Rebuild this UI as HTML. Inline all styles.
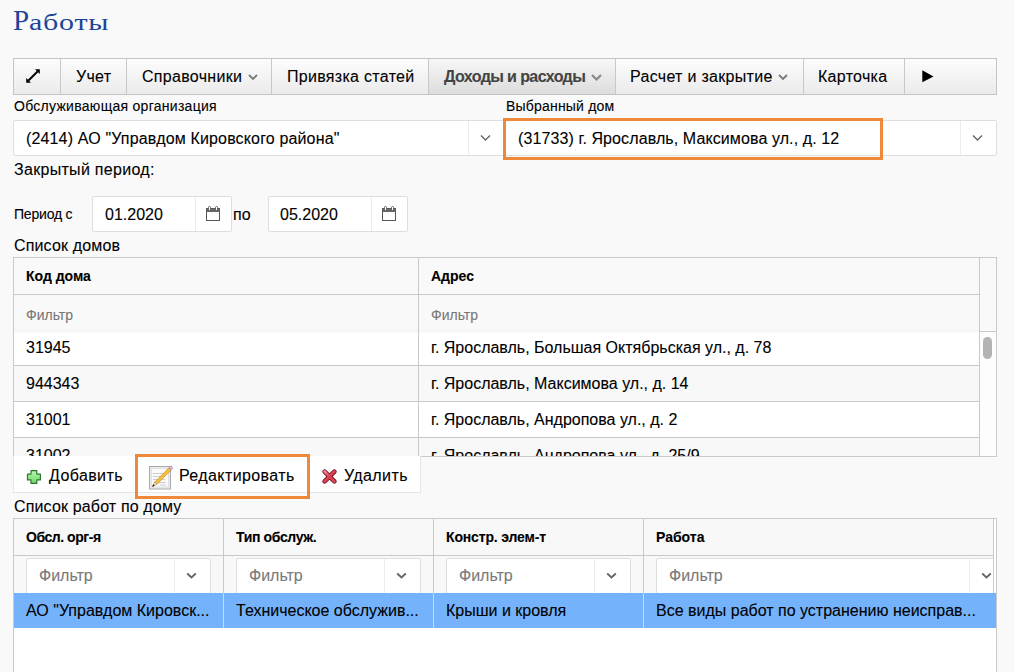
<!DOCTYPE html>
<html><head><meta charset="utf-8">
<style>
*{box-sizing:border-box;margin:0;padding:0}
html,body{width:1014px;height:672px;overflow:hidden;background:#f9f9f9;font-family:"Liberation Sans",sans-serif;color:#000;-webkit-text-stroke:0.1px currentColor}
.a{position:absolute}
.t{position:absolute;white-space:nowrap;line-height:20px;font-size:16px}
#title{position:absolute;left:13px;top:4px;font-family:"Liberation Serif",serif;font-size:29px;line-height:32px;color:#1a4598;white-space:nowrap;-webkit-text-stroke:0}
#tb{position:absolute;left:13px;top:58px;width:984px;height:37px;border:1px solid #c4c4c4;background:linear-gradient(#fcfcfc,#ebebeb)}
.sep{position:absolute;top:0;width:1px;height:35px;background:#c8c8c8}
.chev{position:absolute}
.sel{position:absolute;background:#fff;border:1px solid #dedede;border-radius:2px}
.orange{position:absolute;border:3px solid #ef8838}
.hd{position:absolute;white-space:nowrap;font-weight:bold;font-size:14px;line-height:20px}
.tbt{letter-spacing:0.3px}
.flt{color:#777;font-size:14px}
.hl{position:absolute;height:1px;background:#c9c9c9}
.vl{position:absolute;width:1px;background:#c9c9c9}
</style></head><body>
<div id="title">Р<span style="font-size:24px;letter-spacing:0.6px;display:inline-block;transform:scaleX(1.25);transform-origin:0 0">аботы</span></div>

<div id="tb">
  <div id="active" class="a" style="left:414px;top:0;width:187px;height:35px;background:linear-gradient(#f7f7f7,#dcdcdc)"></div>
  <div class="sep" style="left:46px"></div>
  <div class="sep" style="left:112px"></div>
  <div class="sep" style="left:257px"></div>
  <div class="sep" style="left:414px"></div>
  <div class="sep" style="left:601px"></div>
  <div class="sep" style="left:789px"></div>
  <div class="sep" style="left:890px"></div>
  <svg class="a" style="left:11px;top:9px" width="17" height="17" viewBox="0 0 17 17"><path d="M3.5 12.5 L12.5 3.5" stroke="#000" stroke-width="2"/><path d="M1.2 14.8 L1.2 10 L6 14.8 Z M14.8 1.2 L14.8 6 L10 1.2 Z" fill="#000"/></svg>
  <div class="t tbt" style="left:62px;top:8px">Учет</div>
  <div class="t tbt" style="left:128px;top:8px">Справочники</div>
  <svg class="a" style="left:234px;top:15px" width="10" height="7" viewBox="0 0 10 7"><path d="M1 1 L5 5 L9 1" stroke="#7a7a7a" stroke-width="1.9" fill="none"/></svg>
  <div class="t tbt" style="left:273px;top:8px">Привязка статей</div>
  <div class="t" style="left:430px;top:8px;font-weight:bold;color:#444;font-size:16px;letter-spacing:-0.6px">Доходы и расходы</div>
  <svg class="a" style="left:577px;top:15px" width="11" height="7" viewBox="0 0 11 7"><path d="M1 1 L5.5 5.5 L10 1" stroke="#888" stroke-width="2.2" fill="none"/></svg>
  <div class="t tbt" style="left:616px;top:8px">Расчет и закрытие</div>
  <svg class="a" style="left:764px;top:15px" width="10" height="7" viewBox="0 0 10 7"><path d="M1 1 L5 5 L9 1" stroke="#7a7a7a" stroke-width="1.9" fill="none"/></svg>
  <div class="t tbt" style="left:804px;top:8px">Карточка</div>
  <svg class="a" style="left:908px;top:11px" width="12" height="13" viewBox="0 0 12 13"><path d="M0.3 0.3 L11.5 6.5 L0.3 12.2 Z" fill="#000"/></svg>
</div>

<div class="t" style="left:14px;top:96px;font-size:14px;letter-spacing:0.28px">Обслуживающая организация</div>
<div class="t" style="left:506px;top:96px;font-size:14px;letter-spacing:0.2px">Выбранный дом</div>

<div class="sel" style="left:13px;top:120px;width:492px;height:36px">
  <div class="vl" style="left:454px;top:0;height:34px;background:#ececec"></div>
  <svg class="a" style="left:466px;top:13px" width="12" height="8" viewBox="0 0 12 8"><path d="M1 1.5 L5.5 6 L10 1.5" stroke="#666" stroke-width="1.4" fill="none"/></svg>
  <div class="t" style="left:12px;top:8px;letter-spacing:0.15px">(2414) АО "Управдом Кировского района"</div>
</div>
<div class="sel" style="left:505px;top:120px;width:492px;height:36px">
  <div class="vl" style="left:454px;top:0;height:34px;background:#ececec"></div>
  <svg class="a" style="left:466px;top:13px" width="12" height="8" viewBox="0 0 12 8"><path d="M1 1.5 L5.5 6 L10 1.5" stroke="#666" stroke-width="1.4" fill="none"/></svg>
  <div class="t" style="left:12px;top:8px;letter-spacing:0.1px">(31733) г. Ярославль, Максимова ул., д. 12</div>
</div>
<div class="orange" style="left:503px;top:118px;width:380px;height:42px"></div>

<div class="t" style="left:14px;top:160px;letter-spacing:0.3px">Закрытый период:</div>
<div class="t" style="left:14px;top:204px;font-size:14px;letter-spacing:-0.2px">Период с</div>
<div class="sel" style="left:92px;top:196px;width:140px;height:36px">
  <div class="vl" style="left:102px;top:0;height:34px;background:#ececec"></div>
  <div class="t" style="left:12px;top:8px">01.2020</div>
  <svg class="a" style="left:112px;top:8px" width="16" height="17" viewBox="0 0 16 17"><rect x="1.5" y="3.5" width="13" height="12" fill="#fff" stroke="#555" stroke-width="1"/><rect x="1.5" y="3.5" width="13" height="3.5" fill="#666"/><rect x="3.5" y="1.5" width="2" height="4" rx="1" fill="#fff" stroke="#555" stroke-width="0.9"/><rect x="10.5" y="1.5" width="2" height="4" rx="1" fill="#fff" stroke="#555" stroke-width="0.9"/></svg>
</div>
<div class="t" style="left:233px;top:205px">по</div>
<div class="sel" style="left:268px;top:196px;width:140px;height:36px">
  <div class="vl" style="left:102px;top:0;height:34px;background:#ececec"></div>
  <div class="t" style="left:11px;top:8px">05.2020</div>
  <svg class="a" style="left:112px;top:8px" width="16" height="17" viewBox="0 0 16 17"><rect x="1.5" y="3.5" width="13" height="12" fill="#fff" stroke="#555" stroke-width="1"/><rect x="1.5" y="3.5" width="13" height="3.5" fill="#666"/><rect x="3.5" y="1.5" width="2" height="4" rx="1" fill="#fff" stroke="#555" stroke-width="0.9"/><rect x="10.5" y="1.5" width="2" height="4" rx="1" fill="#fff" stroke="#555" stroke-width="0.9"/></svg>
</div>

<div class="t" style="left:14px;top:236px;letter-spacing:0.15px">Список домов</div>

<!-- table 1 -->
<div class="a" style="left:13px;top:257px;width:984px;height:200px;border:1px solid #c9c9c9;background:#f9f9f9;overflow:hidden">
  <div class="hl" style="left:0;top:36px;width:966px"></div>
  <div class="vl" style="left:404px;top:0;height:200px"></div>
  <div class="vl" style="left:965px;top:0;height:200px"></div>
  <div class="hd" style="left:12px;top:8px">Код дома</div>
  <div class="hd" style="left:417px;top:8px">Адрес</div>
  <div class="t flt" style="left:12px;top:47px">Фильтр</div>
  <div class="t flt" style="left:417px;top:47px">Фильтр</div>
  <div class="a" style="left:0;top:72px;width:965px;height:130px;background:#fff"></div>
  <div class="a" style="left:0;top:72px;width:965px;height:4px;background:linear-gradient(#f3f3f3,#fff)"></div>
  <div class="a" style="left:0;top:108px;width:965px;height:35px;background:#f8f8f8"></div><div class="a" style="left:0;top:180px;width:965px;height:35px;background:#f8f8f8"></div><div class="vl" style="left:404px;top:72px;height:130px"></div>
  <div class="hl" style="left:0;top:107px;width:965px"></div>
  <div class="hl" style="left:0;top:143px;width:965px"></div>
  <div class="hl" style="left:0;top:179px;width:965px"></div>
  <div class="t" style="left:12px;top:80px">31945</div>
  <div class="t" style="left:417px;top:80px">г. Ярославль, Большая Октябрьская ул., д. 78</div>
  <div class="t" style="left:12px;top:116px">944343</div>
  <div class="t" style="left:417px;top:116px">г. Ярославль, Максимова ул., д. 14</div>
  <div class="t" style="left:12px;top:152px">31001</div>
  <div class="t" style="left:417px;top:152px">г. Ярославль, Андропова ул., д. 2</div>
  <div class="t" style="left:12px;top:188px">31002</div>
  <div class="t" style="left:417px;top:188px">г. Ярославль, Андропова ул., д. 25/9</div>
  <div class="a" style="left:966px;top:73px;width:16px;height:130px;background:#fdfdfd"></div><div class="hl" style="left:965px;top:73px;width:17px"></div>
  <div class="a" style="left:969px;top:79px;width:9px;height:22px;border-radius:5px;background:#b3b3b3"></div>
</div>

<!-- button bar -->
<div class="a" style="left:13px;top:456px;width:408px;height:37px;background:#fff;border:1px solid #e6e6e6;border-top:none">
  <svg class="a" style="left:12px;top:13px" width="16" height="16" viewBox="0 0 16 16"><defs><linearGradient id="gp" x1="0" y1="0" x2="0" y2="1"><stop offset="0" stop-color="#b8f5b0"/><stop offset="1" stop-color="#6fd86a"/></linearGradient></defs><path d="M5 1.6 H10.8 V5.1 H14.4 V10.9 H10.8 V14.4 H5 V10.9 H1.5 V5.1 H5 Z" fill="url(#gp)" stroke="#2a7a2a" stroke-width="1.2" stroke-linejoin="round"/></svg>
  <div class="t" style="left:35px;top:10px;letter-spacing:0.4px">Добавить</div>
  <svg class="a" style="left:134px;top:9px" width="26" height="26" viewBox="0 0 26 26"><rect x="1.5" y="1.5" width="21" height="22.5" fill="#eeeeee" stroke="#a8a8b0"/><rect x="3.5" y="3.5" width="17" height="18.5" fill="#fafafa" stroke="#dadada" stroke-width="0.8"/><path d="M5 8.5h12M5 11.5h12M5 14.5h12M11 17.5h7M12 20h6" stroke="#c8c8c8" stroke-width="0.9"/><path d="M6.9 16.9 L9.1 19.1 L23.1 5.1 L20.9 2.9 Z" fill="#f4c040" stroke="#c8841e" stroke-width="0.7"/><path d="M20.9 2.9 L23.1 5.1 L25.1 3.1 L22.9 0.9 Z" fill="#dcb4d8" stroke="#a080a0" stroke-width="0.6"/><path d="M6.9 16.9 L9.1 19.1 L4.3 21.7 Z" fill="#f5deb0" stroke="#a07030" stroke-width="0.5"/><path d="M5.2 19.3 L6.7 20.8 L4.3 21.7 Z" fill="#111"/></svg>
  <div class="t" style="left:165px;top:10px;letter-spacing:0.4px">Редактировать</div>
  <svg class="a" style="left:307px;top:12px" width="17" height="17" viewBox="0 0 17 17"><defs><linearGradient id="gx" x1="0" y1="0" x2="1" y2="1"><stop offset="0" stop-color="#f08a98"/><stop offset="0.5" stop-color="#e33a50"/><stop offset="1" stop-color="#d84a5a"/></linearGradient></defs><path d="M3.6 3.6 L13.4 13.4 M13.4 3.6 L3.6 13.4" stroke="#6a1820" stroke-width="4.6" stroke-linecap="round"/><path d="M3.6 3.6 L13.4 13.4 M13.4 3.6 L3.6 13.4" stroke="url(#gx)" stroke-width="2.8" stroke-linecap="round"/></svg>
  <div class="t" style="left:330px;top:10px;letter-spacing:0.4px">Удалить</div>
</div>
<div class="orange" style="left:135px;top:454px;width:175px;height:45px"></div>

<div class="t" style="left:14px;top:497px;letter-spacing:0.15px">Список работ по дому</div>

<!-- table 2 -->
<div class="a" style="left:13px;top:518px;width:984px;height:160px;border:1px solid #c9c9c9;background:#fff;overflow:hidden">
  <div class="a" style="left:0;top:0;width:980px;height:75px;background:#f8f8f8"></div>
  <div class="hl" style="left:0;top:36px;width:980px"></div>
  <div class="vl" style="left:209px;top:0;height:74px"></div>
  <div class="vl" style="left:419px;top:0;height:74px"></div>
  <div class="vl" style="left:629px;top:0;height:74px"></div>
  <div class="vl" style="left:979px;top:0;height:74px"></div><div class="vl" style="left:979px;top:74px;height:35px;background:#c4dcf8"></div>
  <div class="hd" style="left:12px;top:8px;letter-spacing:-0.45px">Обсл. орг-я</div>
  <div class="hd" style="left:222px;top:8px;letter-spacing:-0.35px">Тип обслуж.</div>
  <div class="hd" style="left:432px;top:8px;letter-spacing:-0.15px">Констр. элем-т</div>
  <div class="hd" style="left:642px;top:8px">Работа</div>
  <div class="sel" style="left:12px;top:39px;width:185px;height:36px">
    <div class="vl" style="left:147px;top:0;height:34px;background:#ececec"></div>
    <svg class="a" style="left:159px;top:13px" width="12" height="8" viewBox="0 0 12 8"><path d="M1.2 1.5 L5.5 5.5 L9.8 1.5" stroke="#666" stroke-width="1.9" fill="none"/></svg>
    <div class="t" style="left:12px;top:7px;color:#7a7a7a">Фильтр</div>
  </div>
  <div class="sel" style="left:222px;top:39px;width:185px;height:36px">
    <div class="vl" style="left:147px;top:0;height:34px;background:#ececec"></div>
    <svg class="a" style="left:159px;top:13px" width="12" height="8" viewBox="0 0 12 8"><path d="M1.2 1.5 L5.5 5.5 L9.8 1.5" stroke="#666" stroke-width="1.9" fill="none"/></svg>
    <div class="t" style="left:12px;top:7px;color:#7a7a7a">Фильтр</div>
  </div>
  <div class="sel" style="left:432px;top:39px;width:185px;height:36px">
    <div class="vl" style="left:147px;top:0;height:34px;background:#ececec"></div>
    <svg class="a" style="left:159px;top:13px" width="12" height="8" viewBox="0 0 12 8"><path d="M1.2 1.5 L5.5 5.5 L9.8 1.5" stroke="#666" stroke-width="1.9" fill="none"/></svg>
    <div class="t" style="left:12px;top:7px;color:#7a7a7a">Фильтр</div>
  </div>
  <div class="a" style="left:642px;top:39px;width:337px;height:36px;overflow:hidden">
  <div class="sel" style="left:0;top:0;width:345px;height:36px">
    <div class="vl" style="left:312px;top:0;height:34px;background:#ececec"></div>
    <svg class="a" style="left:324px;top:13px" width="12" height="8" viewBox="0 0 12 8"><path d="M1.2 1.5 L5.5 5.5 L9.8 1.5" stroke="#666" stroke-width="1.9" fill="none"/></svg>
    <div class="t" style="left:12px;top:7px;color:#7a7a7a">Фильтр</div>
  </div>
  </div>
  <div class="a" style="left:0;top:74px;width:982px;height:35px;background:#74b3fb"></div>
  <div class="vl" style="left:209px;top:74px;height:35px;background:#c4dcf8"></div>
  <div class="vl" style="left:419px;top:74px;height:35px;background:#c4dcf8"></div>
  <div class="vl" style="left:629px;top:74px;height:35px;background:#c4dcf8"></div>
  <div class="t" style="left:12px;top:82px">АО "Управдом Кировск...</div>
  <div class="t" style="left:222px;top:82px">Техническое обслужив...</div>
  <div class="t" style="left:432px;top:82px">Крыши и кровля</div>
  <div class="t" style="left:642px;top:82px">Все виды работ по устранению неисправ...</div>
</div>
</body></html>
